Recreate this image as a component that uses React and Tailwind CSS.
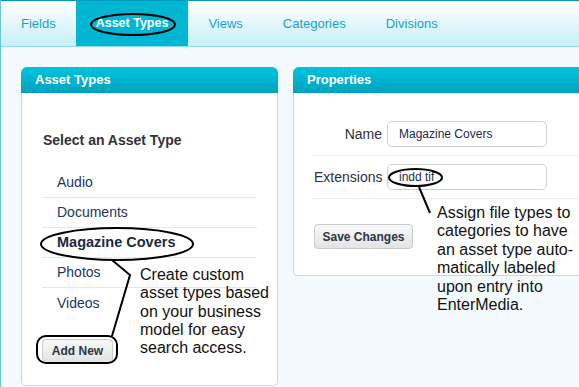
import React from 'react';

const tabs = ['Fields', 'Asset Types', 'Views', 'Categories', 'Divisions'];
const assetTypes = ['Audio', 'Documents', 'Magazine Covers', 'Photos', 'Videos'];

function PanelHeader({ title }) {
  return (
    <div className="h-[26px] rounded-t-[6px] bg-gradient-to-b from-[#00c4e0] to-[#00a3bd] pl-[14px] flex items-center text-white font-bold text-[13px]">
      {title}
    </div>
  );
}

function FieldRow({ label, value }) {
  return (
    <div className="flex items-center gap-[5px] pl-px pt-2 pb-2 border-b border-[#e9ecec] first:pt-0">
      <span className="w-[68px] text-right text-[14px] text-[#2f3040]">{label}</span>
      <div className="w-[160px] h-[26px] rounded-[5px] border border-[#cdd3d5] bg-white flex items-center pl-[11px] text-[12px] text-[#1f2a48]">
        {value}
      </div>
    </div>
  );
}

export default function App() {
  return (
    <div className="relative w-[579px] h-[387px] overflow-hidden bg-[#f3fbfe] font-['Liberation_Sans',Arial,sans-serif]">
      <div className="h-full border-l border-[#6cc6d5]">
        <nav className="flex h-[47px] border-t border-b border-t-[#0098b6] border-b-[#8edde8] bg-gradient-to-b from-white to-[#c6eff7]">
          {tabs.map((t) =>
            t === 'Asset Types' ? (
              <div key={t} className="px-5 flex items-center bg-[#00b6d3] text-white font-bold text-[12.5px]">
                {t}
              </div>
            ) : (
              <div key={t} className="px-5 flex items-center text-[13px] text-[#16a2cb]">
                {t}
              </div>
            )
          )}
        </nav>

        <div className="flex items-start gap-[15px] pt-5 pl-5">
          {/* Asset Types panel */}
          <section className="w-[257px] shrink-0">
            <PanelHeader title="Asset Types" />
            <div className="h-[293px] bg-white border border-t-0 border-[#cfd5d7] rounded-b-[5px] px-5 pt-[39px]">
              <h3 className="ml-px text-[14px] leading-[16px] font-bold text-[#333]">Select an Asset Type</h3>
              <ul className="mt-5">
                {assetTypes.map((a, i) => (
                  <li
                    key={a}
                    className={`h-[30px] pl-[15px] flex items-center ${
                      i < assetTypes.length - 1 ? 'border-b border-[#e6e8e8]' : ''
                    } ${a === 'Magazine Covers' ? 'font-bold text-[14.5px] text-[#1b2a40]' : 'text-[14px] text-[#243656]'}`}
                  >
                    {a}
                  </li>
                ))}
              </ul>
              <button className="mt-[21px] w-[71px] h-[24px] rounded-[4px] border border-[#c9cccc] bg-gradient-to-b from-[#f8f8f8] to-[#e3e3e3] text-[12px] font-bold text-[#2c3446]">
                Add New
              </button>
            </div>
          </section>

          {/* Properties panel */}
          <section className="w-[300px] shrink-0">
            <PanelHeader title="Properties" />
            <div className="bg-white border border-t-0 border-[#cfd5d7] rounded-b-[5px] pl-[19px] pt-[28px] pb-[26px]">
              <FieldRow label="Name" value="Magazine Covers" />
              <FieldRow label="Extensions" value="indd tif" />
              <button className="mt-[25px] ml-px w-[99px] h-[25px] rounded-[4px] border border-[#c9cccc] bg-gradient-to-b from-[#f8f8f8] to-[#e3e3e3] text-[12px] font-bold text-[#2c3446]">
                Save Changes
              </button>
            </div>
          </section>
        </div>
      </div>

      {/* annotations */}
      <svg className="absolute inset-0 pointer-events-none" width="579" height="387" fill="none" stroke="#000" strokeWidth="2">
        <ellipse cx="133" cy="24.5" rx="42" ry="10.5" />
        <ellipse cx="117" cy="244" rx="76" ry="16" />
        <polyline points="112,260 130,275 112,336" />
        <rect x="37" y="336" width="80" height="27" rx="9" />
        <ellipse cx="415.5" cy="177.5" rx="26.5" ry="8.5" />
        <line x1="419" y1="187" x2="430" y2="213" />
      </svg>

      <div className="absolute left-[140px] top-[266px] text-[16px] leading-[18.3px] text-[#111] whitespace-nowrap">
        Create custom<br />
        asset types based<br />
        on your business<br />
        model for easy<br />
        search access.
      </div>

      <div className="absolute left-[437px] top-[204px] text-[16px] leading-[18.4px] text-[#111] whitespace-nowrap">
        Assign file types to<br />
        categories to have<br />
        an asset type auto-<br />
        matically labeled<br />
        upon entry into<br />
        EnterMedia.
      </div>
    </div>
  );
}
